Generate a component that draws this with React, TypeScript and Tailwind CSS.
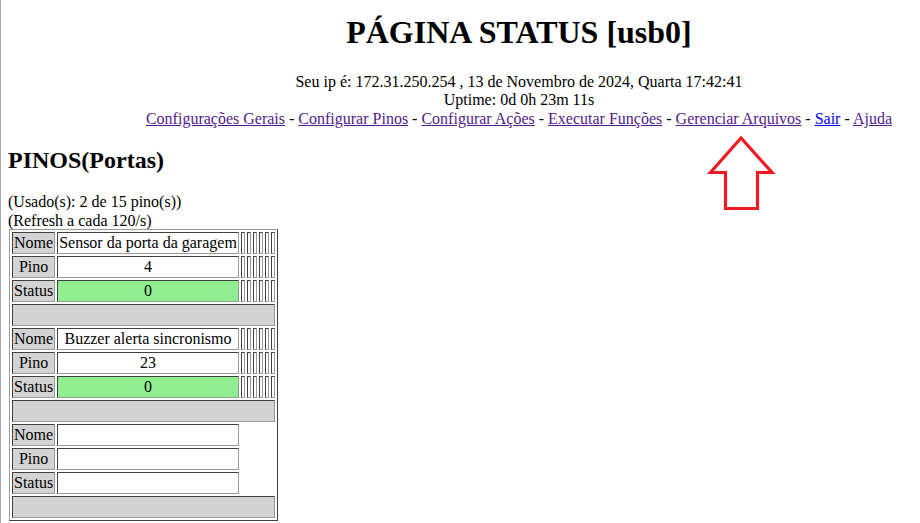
import React from "react";

const lbl =
  "bg-[#d3d3d3] border border-t-[#404040] border-l-[#404040] border-b-[#9a9a9a] border-r-[#9a9a9a] p-px text-center whitespace-nowrap leading-[18px]";
const val =
  "border border-t-[#404040] border-l-[#404040] border-b-[#9a9a9a] border-r-[#9a9a9a] p-px text-center whitespace-nowrap leading-[18px]";
const thin =
  "border border-t-[#404040] border-l-[#404040] border-b-[#9a9a9a] border-r-[#9a9a9a] p-px w-[4px] min-w-[4px]";

function Thins() {
  return (
    <>
      <td className={thin}></td>
      <td className={thin}></td>
      <td className={thin}></td>
      <td className={thin}></td>
      <td className={thin}></td>
      <td className={thin}></td>
    </>
  );
}

function Group({ nome, pino, status, filled }: { nome: string; pino: string; status: string; filled: boolean }) {
  return (
    <>
      <tr>
        <td className={lbl}>Nome</td>
        <td className={val + " bg-white"}>{nome}</td>
        {filled && <Thins />}
      </tr>
      <tr>
        <td className={lbl}>Pino</td>
        <td className={val + " bg-white"}>{pino}</td>
        {filled && <Thins />}
      </tr>
      <tr>
        <td className={lbl}>Status</td>
        <td className={val + (filled ? " bg-[#90ee90]" : " bg-white")}>{status}</td>
        {filled && <Thins />}
      </tr>
      <tr>
        <td colSpan={8} className={lbl + " h-[22px]"}>
          &nbsp;
        </td>
      </tr>
    </>
  );
}

export default function App() {
  const link = "text-[#551a8b] underline";
  return (
    <div
      className="relative min-h-[523px] bg-white border-l border-[#a9a9a9] text-black text-[16px] leading-[18.4px] px-[7px]"
      style={{ fontFamily: '"Liberation Serif", "Times New Roman", serif' }}
    >
      <div className="flex justify-end pr-[21px]">
        <div className="text-center">
          <h1 className="text-[32px] font-bold leading-[37px] pt-[14px] pb-[22px]">PÁGINA STATUS [usb0]</h1>
          <div>Seu ip é: 172.31.250.254 , 13 de Novembro de 2024, Quarta 17:42:41</div>
          <div>Uptime: 0d 0h 23m 11s</div>
          <div>
            <a className={link}>Configurações Gerais</a> - <a className={link}>Configurar Pinos</a> -{" "}
            <a className={link}>Configurar Ações</a> - <a className={link}>Executar Funções</a> -{" "}
            <a className={link}>Gerenciar Arquivos</a> - <a className="text-[#0000ee] underline">Sair</a> -{" "}
            <a className={link}>Ajuda</a>
          </div>
        </div>
      </div>
      <h2 className="text-[24px] font-bold leading-[28px] mt-[18px] mb-[19px]">PINOS(Portas)</h2>
      <div>(Usado(s): 2 de 15 pino(s))</div>
      <div className="mb-[-1px]">(Refresh a cada 120/s)</div>
      <table className="border-separate border-spacing-[2px] border border-t-[#9a9a9a] border-l-[#9a9a9a] border-b-[#404040] border-r-[#404040] ml-px">
        <tbody>
          <Group nome="Sensor da porta da garagem" pino="4" status="0" filled />
          <Group nome="Buzzer alerta sincronismo" pino="23" status="0" filled />
          <Group nome="" pino="" status="" filled={false} />
        </tbody>
      </table>
      <svg className="absolute left-[700px] top-[130px]" width="80" height="90" viewBox="700 130 80 90">
        <polygon
          points="740,138 709.5,172.5 724.5,172.5 724.5,208.5 756.5,208.5 756.5,172.5 771,172.5"
          fill="none"
          stroke="#ed1c24"
          strokeWidth="3.2"
          strokeLinejoin="miter"
        />
      </svg>
    </div>
  );
}
